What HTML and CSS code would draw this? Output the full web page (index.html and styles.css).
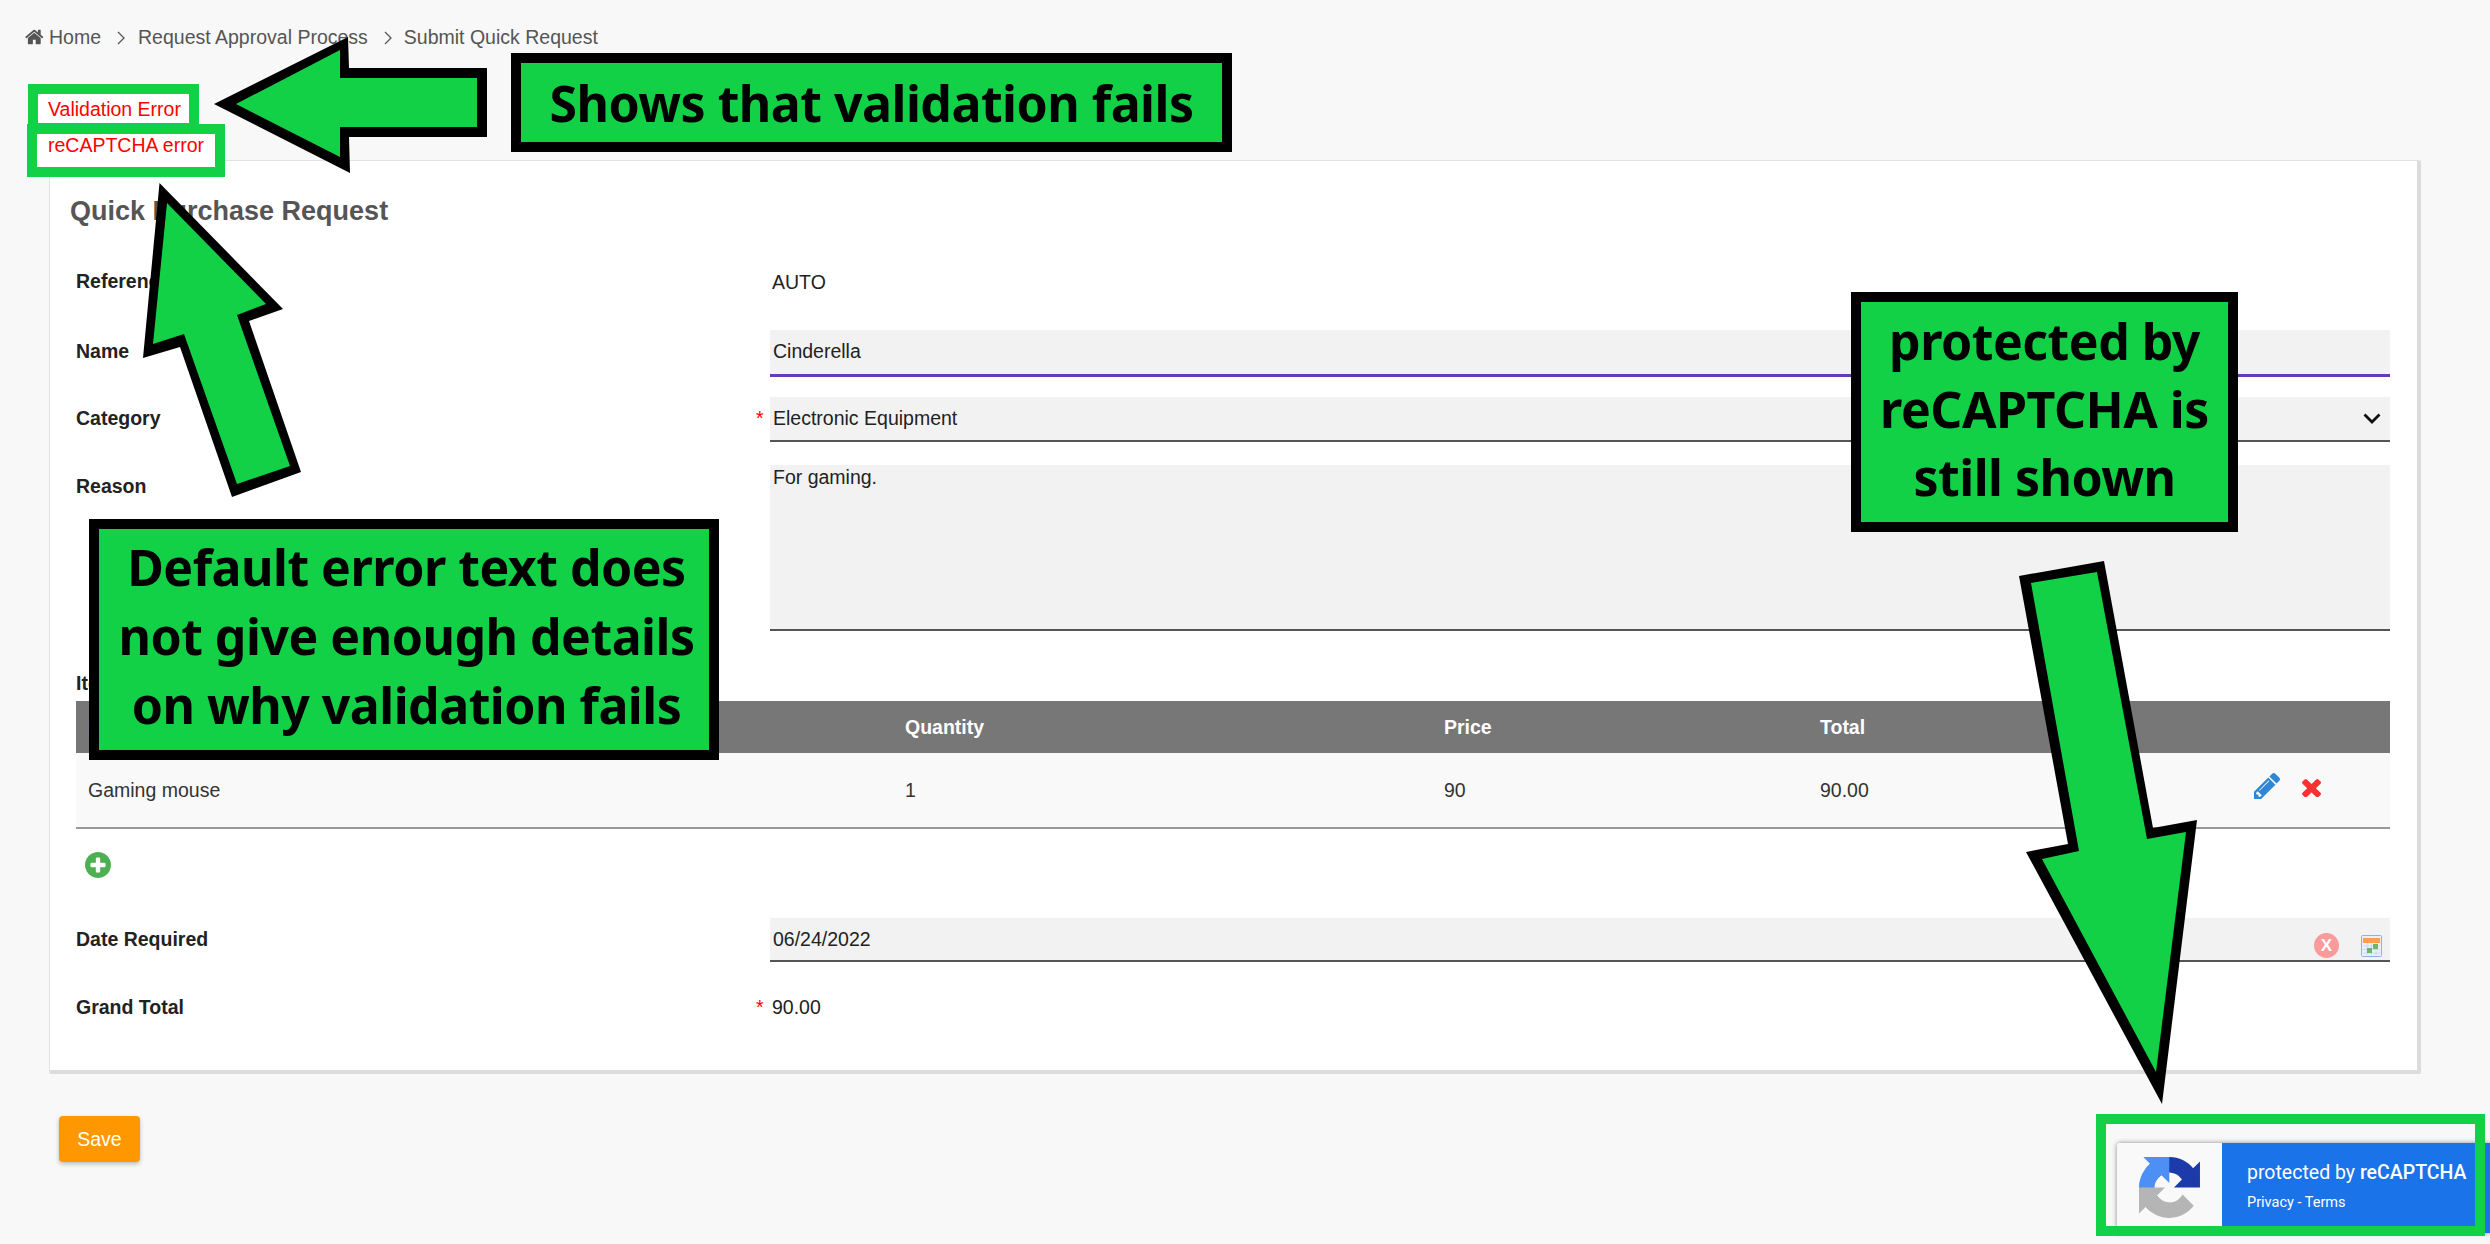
FILE: index.html
```html
<!DOCTYPE html>
<html lang="en">
<head>
<meta charset="utf-8">
<title>Submit Quick Request</title>
<link rel="stylesheet" href="styles.css">
</head>
<body>
<main class="page">
  <nav class="crumbs">
    <svg class="home-icon" viewBox="0 0 1792 1792"><path fill="#555" d="M1408 992v480q0 26-19 45t-45 19h-384v-384h-256v384h-384q-26 0-45-19t-19-45v-480q0-1 .5-3t.5-3l575-474 575 474q1 2 1 6zm223-69l-62 74q-8 9-21 11h-3q-13 0-21-7l-692-577-692 577q-12 8-24 7-13-2-21-11l-62-74q-8-10-7-23.500t11-21.500l719-599q32-26 76-26t76 26l244 204v-195q0-14 9-23t23-9h192q14 0 23 9t9 23v408l219 182q10 8 11 21.500t-7 23.500z"/></svg>
    <span class="crumb-home">Home</span>
    <svg class="crumb-sep" viewBox="0 0 8 14"><path d="M1 1l6 6-6 6" fill="none" stroke="#555" stroke-width="1.3"/></svg>
    <span>Request Approval Process</span>
    <svg class="crumb-sep" viewBox="0 0 8 14"><path d="M1 1l6 6-6 6" fill="none" stroke="#555" stroke-width="1.3"/></svg>
    <span>Submit Quick Request</span>
  </nav>

  <div class="errors">
    <div class="error error-first">Validation Error</div>
    <div class="error error-second">reCAPTCHA error</div>
  </div>

  <section class="card">
    <h1 class="card-title">Quick Purchase Request</h1>

    <div class="field field-ref">
      <div class="label">Reference</div><div class="star"></div>
      <div class="plain">AUTO</div>
    </div>
    <div class="field field-name">
      <div class="label">Name</div><div class="star"></div>
      <div class="input input-focus">Cinderella</div>
    </div>
    <div class="field field-cat">
      <div class="label">Category</div><div class="star">*</div>
      <div class="input input-select">Electronic Equipment
        <svg class="chevron" viewBox="0 0 18 11"><path d="M1.500 1.500L9 9l7.500-7.500" fill="none" stroke="#111" stroke-width="2.800"/></svg>
      </div>
    </div>
    <div class="field field-reason">
      <div class="label">Reason</div><div class="star"></div>
      <div class="input input-area">For gaming.</div>
    </div>

    <div class="items-label">Items</div>
    <div class="table">
      <div class="table-row table-head">
        <div>Item</div><div>Quantity</div><div>Price</div><div>Total</div><div></div>
      </div>
      <div class="table-row table-body">
        <div class="cell-item">Gaming mouse</div><div>1</div><div>90</div><div>90.00</div>
        <div class="cell-actions">
          <svg class="icon-edit" viewBox="128 149 1515 1515"><path fill="#2f86d4" d="M491 1536l91-91-235-235-91 91v107h128v128h107zm523-928q0-22-22-22-10 0-17 7l-542 542q-7 7-7 17 0 22 22 22 10 0 17-7l542-542q7-7 7-17zm-54-192l416 416-832 832h-416v-416zm683 96q0 53-37 90l-166 166-416-416 166-165q36-38 90-38 53 0 91 38l235 234q37 39 37 91z"/></svg>
          <svg class="icon-del" viewBox="236 236 1254 1290" preserveAspectRatio="none"><path fill="#f93131" d="M1490 1322q0 40-28 68l-136 136q-28 28-68 28t-68-28l-294-294-294 294q-28 28-68 28t-68-28l-136-136q-28-28-28-68t28-68l294-294-294-294q-28-28-28-68t28-68l136-136q28-28 68-28t68 28l294 294 294-294q28-28 68-28t68 28l136 136q28 28 28 68t-28 68l-294 294 294 294q28 28 28 68z"/></svg>
        </div>
      </div>
    </div>
    <div class="add-row">
      <svg class="icon-add" viewBox="128 128 1536 1536"><path fill="#4caf50" d="M1344 960v-128q0-26-19-45t-45-19h-256v-256q0-26-19-45t-45-19h-128q-26 0-45 19t-19 45v256h-256q-26 0-45 19t-19 45v128q0 26 19 45t45 19h256v256q0 26 19 45t45 19h128q26 0 45-19t19-45v-256h256q26 0 45-19t19-45zm320-64q0 209-103 385.500t-279.500 279.500-385.500 103-385.500-103-279.500-279.500-103-385.500 103-385.500 279.500-279.500 385.500-103 385.500 103 279.500 279.500 103 385.500z"/></svg>
    </div>

    <div class="field field-date">
      <div class="label">Date Required</div><div class="star"></div>
      <div class="input input-date">06/24/2022
        <span class="date-tools">
          <span class="clear-btn">X</span>
          <svg class="icon-cal" viewBox="0 0 21 22">
            <rect x=".5" y=".5" width="20" height="21" rx="1" fill="#e9f0fa" stroke="#8fb0e2"/>
            <rect x="2" y="3" width="17" height="5" fill="#ff9d52"/>
            <path d="M2 11h17M2 14.500h17M2 18h17M6 8v12M10.500 8v12M15 8v12" stroke="#c6d5ea" stroke-width=".8"/>
            <rect x="6" y="13" width="5" height="5" fill="#6fb36f"/>
            <rect x="12" y="9" width="5" height="5" fill="#6fb36f"/>
          </svg>
        </span>
      </div>
    </div>
    <div class="field field-total">
      <div class="label">Grand Total</div><div class="star">*</div>
      <div class="plain">90.00</div>
    </div>
  </section>

  <div class="actions"><button class="save-btn">Save</button></div>
</main>

<aside class="recaptcha">
  <div class="recaptcha-logo">
    <svg viewBox="0 0 64 64">
      <path d="M64 31.955l-.033-1.37V4.687l-7.16 7.16C50.948 4.674 42.033.093 32.05.093c-10.4 0-19.622 4.96-25.458 12.64l11.736 11.86a15.55 15.55 0 0 1 4.754-5.334c2.05-1.6 4.952-2.906 8.968-2.906.485 0 .86.057 1.135.163 4.976.393 9.29 3.14 11.83 7.125l-8.307 8.307c10.522-.04 22.4-.066 27.295.005" fill="#1c3aa9"/>
      <path d="M31.862.094l-1.37.033H4.594l7.16 7.16C4.58 13.147 0 22.06 0 32.046c0 10.4 4.96 19.622 12.64 25.458L24.5 45.768a15.55 15.55 0 0 1-5.334-4.754c-1.6-2.05-2.906-4.952-2.906-8.968 0-.485.057-.86.163-1.135.393-4.976 3.14-9.29 7.125-11.83l8.307 8.307c-.04-10.522-.066-22.4.005-27.295" fill="#4d8ff5"/>
      <path d="M.001 32.045l.033 1.37v25.898l7.16-7.160c5.86 7.173 14.774 11.754 24.760 11.754 10.400 0 19.622-4.960 25.458-12.640L45.676 39.410a15.550 15.550 0 0 1-4.754 5.334c-2.050 1.600-4.952 2.906-8.968 2.906-.485 0-.860-.057-1.135-.163-4.976-.393-9.290-3.140-11.830-7.125l8.307-8.307c-10.522.040-22.400.066-27.295-.005" fill="#b5b5b5"/>
    </svg>
  </div>
  <div class="recaptcha-text">
    <div class="recaptcha-main">protected by <strong>reCAPTCHA</strong></div>
    <div class="recaptcha-links">Privacy - Terms</div>
  </div>
</aside>

<div class="frame-recaptcha"></div>

<svg class="arrows" viewBox="0 0 2490 1244">
  <polygon fill="#000" points="214,104 348,37 349,68 487,68 487,137 349,137 350,173"/>
  <polygon fill="#12d147" points="236,104 340,50 340,78 477,78 477,127 340,127 340,157"/>
  <polygon fill="#000" points="159.500,183 283,309 249,321 301,472 232,497 180,347 143,358"/>
  <polygon fill="#12d147" points="167,203 266,304 237,315 290,466 237,484 184,334 153,344"/>
  <polygon fill="#000" points="2019,576 2104,561 2153,828 2197,820 2162,1104 2026,852 2068,844"/>
  <polygon fill="#12d147" points="2031,583 2097,572 2147,839 2186,832 2156,1072 2042,859 2079,851"/>
</svg>

<div class="callout callout-shows">Shows that validation fails</div>
<div class="callout callout-default">Default error text does<br>not give enough details<br>on why validation fails</div>
<div class="callout callout-protected">protected by<br>reCAPTCHA is<br>still shown</div>
</body>
</html>
```
FILE: styles.css
```css
* { box-sizing: border-box; }
html, body { margin: 0; padding: 0; }
body {
  width: 2490px;
  height: 1244px;
  overflow: hidden;
  position: relative;
  background: #f8f8f8;
  font-family: "Liberation Sans", Arial, sans-serif;
  font-size: 19.500px;
  color: #333;
}
.page { padding: 0; }

.crumbs {
  display: flex;
  align-items: center;
  height: 24px;
  margin: 25px 0 0 25px;
  color: #555;
}
.home-icon { width: 20px; height: 20px; }
.crumb-home { margin-left: 4px; }
.crumb-sep { width: 8px; height: 14px; margin: 2px 13px 0 16px; }
.crumb-sep + span + .crumb-sep { margin-right: 12px; }

.errors {
  position: relative;
  z-index: 2;
  height: 93px;
  margin: 35px 0 -17px 0;
}
.error {
  border: 10px solid #12d147;
  background: #fff;
  color: #f00;
  line-height: 29px;
  padding-left: 10px;
}
.error-first { width: 171px; height: 40px; margin-left: 28px; padding-top: 1px; border-bottom-width: 1px; white-space: nowrap; }
.error-second { width: 198px; height: 53px; margin-left: 27px; line-height: 22px; padding-left: 11px; white-space: nowrap; }

.card {
  height: 914px;
  margin: 0 69px 0 49px;
  padding: 35px 28px 0 26px;
  background: #fff;
  border: 1px solid #e2e2e2;
  border-right: 4px solid #dcdcdc;
  border-bottom: 4px solid #dcdcdc;
  border-radius: 2px;
}
.card-title {
  margin: 0 0 0 -6px;
  font-size: 27px;
  line-height: 30px;
  font-weight: 700;
  color: #555;
}

.field {
  display: grid;
  grid-template-columns: 680px 14px 1620px;
}
.label { font-weight: 700; color: #222; line-height: 24px; }
.star { color: #f00; line-height: 24px; }
.plain { color: #222; line-height: 24px; padding-left: 2px; }
.input {
  position: relative;
  background: #f2f2f2;
  border-bottom: 2px solid #555;
  color: #222;
  padding-left: 3px;
  line-height: 24px;
}

.field-ref { margin-top: 43px; height: 24px; }
.field-ref .plain { padding-top: 1px; }
.field-name { margin-top: 37px; height: 47px; }
.field-name .label { padding-top: 9px; }
.input-focus { height: 47px; border-bottom: 3px solid #673ab7; padding-top: 9px; }
.field-cat { margin-top: 20px; height: 45px; }
.field-cat .label { padding-top: 9px; }
.field-cat .star { padding-top: 9px; }
.input-select { height: 45px; padding-top: 9px; }
.chevron { position: absolute; right: 9px; top: 16px; width: 18px; height: 11px; }
.field-reason { margin-top: 23px; height: 166px; }
.field-reason .label { padding-top: 9px; }
.input-area { height: 166px; padding-top: 0; }

.items-label {
  margin-top: 40px;
  height: 30px;
  line-height: 24px;
  font-weight: 700;
  color: #222;
}
.table { width: 2314px; }
.table-row {
  display: grid;
  grid-template-columns: 829px 539px 376px 1fr 136px;
  align-items: center;
}
.table-head {
  height: 52px;
  background: #777;
  color: #fff;
  font-weight: 700;
}
.table-body {
  height: 76px;
  background: #f9f9f9;
  border-bottom: 2px solid #999;
  color: #333;
}
.table-row > div:first-child { padding-left: 12px; }
.cell-actions { display: flex; align-items: center; height: 26px; margin-top: -8px; }
.icon-edit { width: 26px; height: 26px; }
.icon-del { width: 20px; height: 20px; margin: 1px 0 0 21px; }

.add-row { height: 89px; padding: 23px 0 0 9px; }
.icon-add { display: block; width: 26px; height: 26px; }

.field-date { height: 44px; }
.field-date .label { padding-top: 9px; }
.input-date { height: 44px; padding-top: 9px; }
.date-tools { position: absolute; right: 8px; top: 15px; display: flex; align-items: center; }
.clear-btn {
  display: flex;
  align-items: center;
  justify-content: center;
  width: 25px;
  height: 25px;
  border-radius: 50%;
  background: #fb9a9a;
  color: #fff;
  font-weight: 700;
  font-size: 17px;
}
.icon-cal { width: 21px; height: 22px; margin-left: 22px; }
.field-total { margin-top: 33px; height: 24px; }

.actions { padding: 42px 0 0 59px; }
.save-btn {
  display: block;
  width: 81px;
  height: 46px;
  border: 0;
  border-radius: 4px;
  background: #ff9800;
  color: #fff;
  font: 19.500px "Liberation Sans", Arial, sans-serif;
  box-shadow: 0 2px 4px rgba(0,0,0,.25);
}

.recaptcha {
  position: absolute;
  left: 2117px;
  top: 1143px;
  width: 373px;
  height: 90px;
  display: flex;
  border-radius: 3px 0 0 3px;
  box-shadow: 0 0 5px rgba(0,0,0,.45);
  overflow: hidden;
  font-family: Roboto, sans-serif;
  color: #fff;
}
.recaptcha-logo {
  width: 105px;
  background: #f9f9f9;
  padding: 14px 0 0 22px;
}
.recaptcha-logo svg { display: block; width: 61px; height: 61px; }
.recaptcha-text { flex: 1; background: #1a73e8; padding: 16px 0 0 25px; }
.recaptcha-main { font-size: 19.500px; line-height: 28px; white-space: nowrap; }
.recaptcha-main strong { font-weight: 500; }
.recaptcha-links { font-size: 14.500px; line-height: 20px; margin-top: 6px; }

.frame-recaptcha {
  position: absolute;
  left: 2096px;
  top: 1114px;
  width: 389px;
  height: 122px;
  border: 10px solid #12d147;
}

.arrows {
  position: absolute;
  left: 0;
  top: 0;
  width: 2490px;
  height: 1244px;
  pointer-events: none;
}

.callout {
  position: absolute;
  display: flex;
  align-items: center;
  justify-content: center;
  text-align: center;
  background: #12d147;
  border: 10px solid #000;
  color: #000;
  font-family: "Noto Sans", "Open Sans", sans-serif;
  font-weight: 700;
  letter-spacing: -.5px;
  white-space: nowrap;
}
.callout-shows {
  left: 511px; top: 53px; width: 721px; height: 99px;
  font-size: 50px; line-height: 68px;
}
.callout-default {
  left: 89px; top: 519px; width: 630px; height: 241px;
  font-size: 50px; line-height: 69px;
  padding: 0 0 6px 5px;
}
.callout-protected {
  left: 1851px; top: 292px; width: 387px; height: 240px;
  font-size: 50px; line-height: 68px;
  padding-bottom: 6px;
}
```
